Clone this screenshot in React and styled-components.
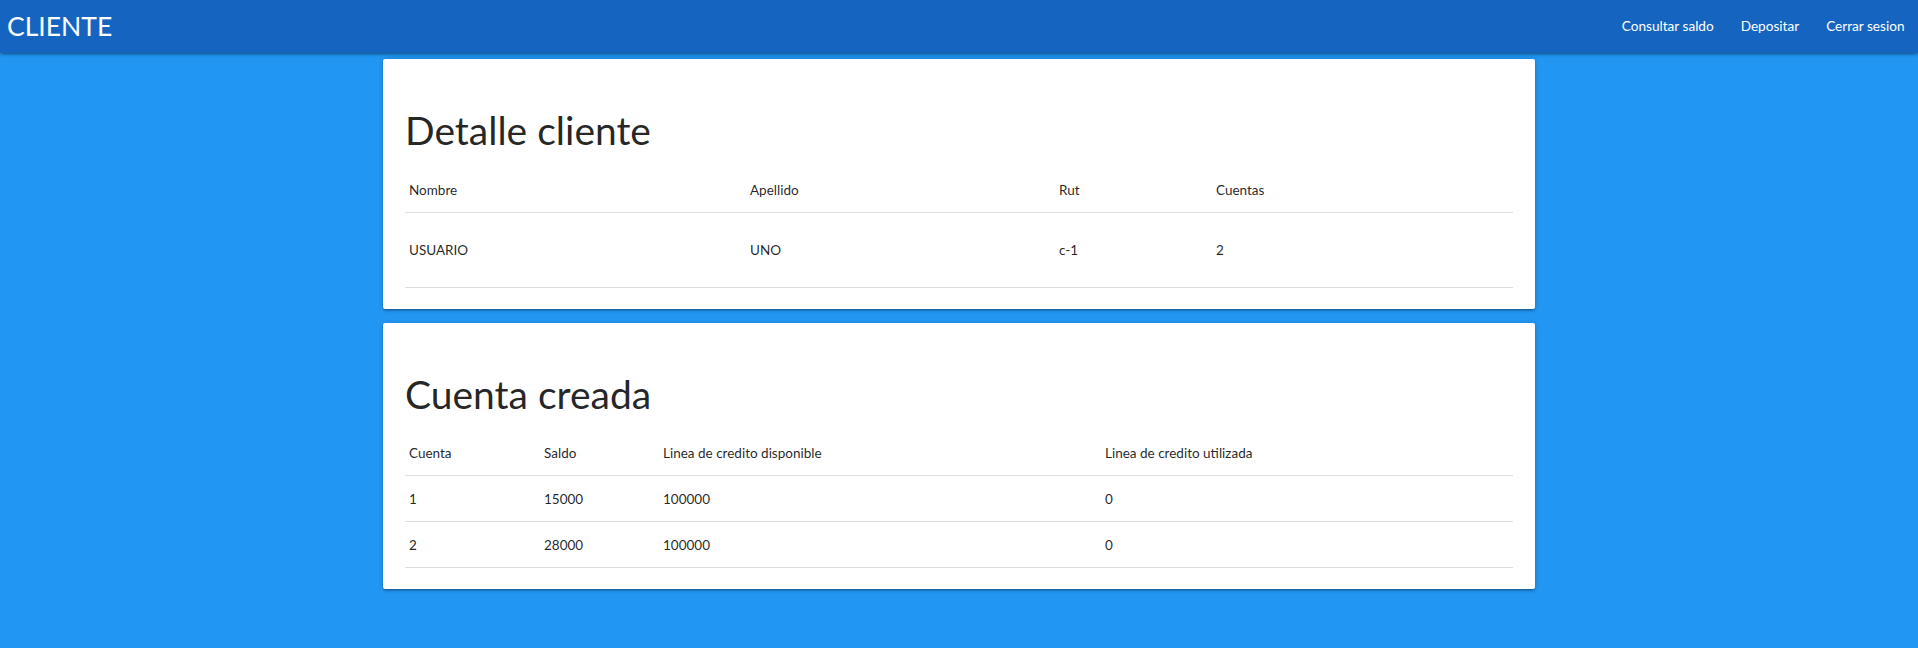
import styled, { createGlobalStyle } from "styled-components";

const GlobalStyle = createGlobalStyle`
  html, body {
    margin: 0;
    padding: 0;
    background-color: #2196f3;
    font-family: "Lato", "Noto Sans", sans-serif;
    color: rgba(0, 0, 0, 0.87);
  }
  * {
    box-sizing: border-box;
  }
`;

const Page = styled.div`
  min-height: 648px;
  background-color: #2196f3;
`;

const Nav = styled.nav`
  display: flex;
  justify-content: space-between;
  align-items: center;
  height: 53px;
  padding: 0 0 0 7px;
  background-color: #1565c0;
  box-shadow: 0 2px 2px 0 rgba(0, 0, 0, 0.14), 0 3px 1px -2px rgba(0, 0, 0, 0.12),
    0 1px 5px 0 rgba(0, 0, 0, 0.2);
`;

const Brand = styled.a`
  color: #fff;
  font-size: 26.5px;
  line-height: 53px;
  text-decoration: none;
`;

const Links = styled.ul`
  display: flex;
  margin: 0;
  padding: 0;
  list-style: none;
`;

const LinkItem = styled.li`
  a {
    display: block;
    padding: 0 13.5px;
    color: #fff;
    font-size: 13.6px;
    line-height: 53px;
    text-decoration: none;
  }
`;

const Main = styled.main`
  display: flex;
  flex-direction: column;
  align-items: center;
  gap: 14px;
  padding-top: 6px;
`;

const Card = styled.section`
  width: 1152px;
  padding: 24px 22px 21px;
  background-color: #fff;
  border-radius: 2px;
  box-shadow: 0 2px 2px 0 rgba(0, 0, 0, 0.14), 0 3px 1px -2px rgba(0, 0, 0, 0.12),
    0 1px 5px 0 rgba(0, 0, 0, 0.2);
`;

const Title = styled.h3`
  margin: 25px 0 16px;
  font-size: 39px;
  font-weight: 400;
  line-height: 44px;
  color: rgba(0, 0, 0, 0.87);
`;

const Table = styled.table`
  width: 100%;
  border-collapse: collapse;
  table-layout: fixed;
  font-size: 13.5px;
`;

const HeadCell = styled.th`
  width: ${(props) => props.width}px;
  height: 44px;
  padding: 0 4px;
  text-align: left;
  font-weight: 400;
`;

const Row = styled.tr`
  border-bottom: 1px solid rgba(0, 0, 0, 0.13);
`;

const Cell = styled.td`
  height: ${(props) => props.height || 46}px;
  padding: 0 4px;
`;

const clientCols = [
  { label: "Nombre", width: 341 },
  { label: "Apellido", width: 309 },
  { label: "Rut", width: 157 },
  { label: "Cuentas", width: 301 },
];

const accountCols = [
  { label: "Cuenta", width: 135 },
  { label: "Saldo", width: 119 },
  { label: "Linea de credito disponible", width: 442 },
  { label: "Linea de credito utilizada", width: 412 },
];

const accounts = [
  ["1", "15000", "100000", "0"],
  ["2", "28000", "100000", "0"],
];

const App = () => {
  return (
    <Page>
      <GlobalStyle />
      <Nav>
        <Brand href="#">CLIENTE</Brand>
        <Links>
          <LinkItem>
            <a href="#">Consultar saldo</a>
          </LinkItem>
          <LinkItem>
            <a href="#">Depositar</a>
          </LinkItem>
          <LinkItem>
            <a href="#">Cerrar sesion</a>
          </LinkItem>
        </Links>
      </Nav>
      <Main>
        <Card>
          <Title>Detalle cliente</Title>
          <Table>
            <thead>
              <Row>
                {clientCols.map((c) => (
                  <HeadCell key={c.label} width={c.width}>
                    {c.label}
                  </HeadCell>
                ))}
              </Row>
            </thead>
            <tbody>
              <Row>
                <Cell height={75}>USUARIO</Cell>
                <Cell height={75}>UNO</Cell>
                <Cell height={75}>c-1</Cell>
                <Cell height={75}>2</Cell>
              </Row>
            </tbody>
          </Table>
        </Card>
        <Card>
          <Title>Cuenta creada</Title>
          <Table>
            <thead>
              <Row>
                {accountCols.map((c) => (
                  <HeadCell key={c.label} width={c.width}>
                    {c.label}
                  </HeadCell>
                ))}
              </Row>
            </thead>
            <tbody>
              {accounts.map((row) => (
                <Row key={row[0]}>
                  {row.map((v, i) => (
                    <Cell key={i}>{v}</Cell>
                  ))}
                </Row>
              ))}
            </tbody>
          </Table>
        </Card>
      </Main>
    </Page>
  );
};

export default App;
